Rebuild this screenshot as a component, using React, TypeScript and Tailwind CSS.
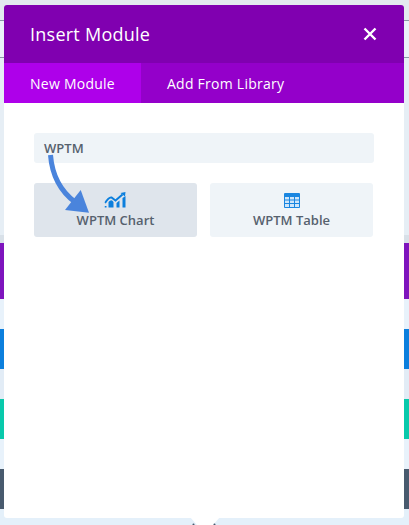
export default function App() {
  return (
    <div className="relative w-[409px] h-[525px] overflow-hidden bg-[#e3eaef] font-['Open_Sans',sans-serif]">
      {/* page behind the modal */}
      <div className="flex flex-col h-full">
        <div className="h-[21px] shrink-0 border-b border-[#8a98a6]" />
        <div className="h-[37px] shrink-0 border-b border-[#8a98a6] bg-[#eaf2f8]" />
        <div className="h-[177px] shrink-0 bg-[#e6eef5]" />
        <div className="h-[8px] shrink-0 bg-[#d8e0e8]" />
        <div className="h-[56px] shrink-0 bg-[#7e14bd]" />
        <div className="h-[30px] shrink-0 bg-[#e8f2fb]" />
        <div className="h-[40px] shrink-0 bg-[#0c7fdd]" />
        <div className="h-[30px] shrink-0 bg-[#e2ecf6]" />
        <div className="h-[40px] shrink-0 bg-[#08c9ab]" />
        <div className="h-[30px] shrink-0 bg-[#e8f2fb]" />
        <div className="h-[40px] shrink-0 bg-[#485a6e]" />
        <div className="flex-1 bg-[#e4f0fa]" />
      </div>

      {/* modal */}
      <div className="absolute left-[4px] top-[5px] w-[400px] h-[513px] bg-white rounded-[3px] flex flex-col">
        <div className="h-[58px] shrink-0 bg-[#8000b0] rounded-t-[3px] flex items-center justify-between pl-[26px] pr-[27px]">
          <span className="text-[18px] font-medium tracking-[0.25px] text-white leading-none">Insert Module</span>
          <svg width="14" height="14" viewBox="0 0 14 14" className="text-white">
            <path d="M1.500 1.500 L12.500 12.500 M12.500 1.500 L1.500 12.500" stroke="currentColor" strokeWidth="2.400" />
          </svg>
        </div>
        <div className="h-[40px] shrink-0 bg-[#9400ca] flex text-[14px] font-medium tracking-[0.25px] text-white">
          <div className="w-[137px] bg-[#ae00ea] flex items-center pl-[26px]">New Module</div>
          <div className="flex items-center pl-[26px]">Add From Library</div>
        </div>
        <div className="flex flex-col pt-[30px] px-[30px]">
          <div className="h-[30px] bg-[#eff4f8] rounded-[3px] flex items-center pl-[10px] pt-[1px] text-[13px] font-semibold text-[#56616e]">
            WPTM
          </div>
          <div className="flex gap-[13px] mt-[20px]">
            <div className="w-[163px] h-[54px] bg-[#dfe5ec] rounded-[3px] flex flex-col items-center pt-[9px] text-[13px] font-semibold text-[#56616e]">
              <svg width="22" height="16" viewBox="0 0 22 16" className="text-[#0c7fdd] -translate-x-[0.5px]">
                <path d="M0.500 11 C3 7 5 5 7 5.500 L11 8.500 L18 2.500" fill="none" stroke="currentColor" strokeWidth="2" />
                <path d="M16 1 L21 0 L20.500 4.500 Z" fill="currentColor" />
                <path d="M0 15.500 V14 H2 V15.500 Z M4 15.500 V10 Q7 6.500 9 10 V15.500 Z M12 15.500 V11 L15 8.500 V15.500 Z M18 15.500 V6 L21 4 V15.500 Z" fill="currentColor" />
              </svg>
              <span className="leading-[18px] mt-[3px]">WPTM Chart</span>
            </div>
            <div className="w-[163px] h-[54px] bg-[#eff4f8] rounded-[3px] flex flex-col items-center pt-[10px] text-[13px] font-semibold text-[#56616e]">
              <svg width="16" height="15" viewBox="0 0 16 15">
                <rect x="0" y="0" width="16" height="15" rx="1" fill="#1a86e0" />
                <path d="M1 4h4v2.500H1z M6 4h4v2.500H6z M11 4h4v2.500H11z M1 7.500h4V10H1z M6 7.500h4V10H6z M11 7.500h4V10H11z M1 11h4v3H1z M6 11h4v3H6z M11 11h4v3H11z" fill="#cfe6fa" />
              </svg>
              <span className="leading-[18px] mt-[3px]">WPTM Table</span>
            </div>
          </div>
        </div>
      </div>

      {/* modal pointer */}
      <svg className="absolute left-[188px] top-[517px]" width="34" height="8" viewBox="0 0 34 8">
        <path d="M2 0 L9 8 H25 L32 0 Z" fill="#ffffff" />
        <circle cx="5.500" cy="7.500" r="1" fill="#485a6e" />
        <circle cx="26.500" cy="7.500" r="1" fill="#485a6e" />
      </svg>

      {/* annotation arrow */}
      <svg className="absolute left-[44px] top-[152px]" width="50" height="62" viewBox="0 0 50 62">
        <path d="M6.500 3 C8 22 15 38 31 50" fill="none" stroke="#4a84dc" strokeWidth="5" />
        <path d="M21 58 L45 60.700 L36.700 38 Z" fill="#4a84dc" />
      </svg>
    </div>
  );
}
